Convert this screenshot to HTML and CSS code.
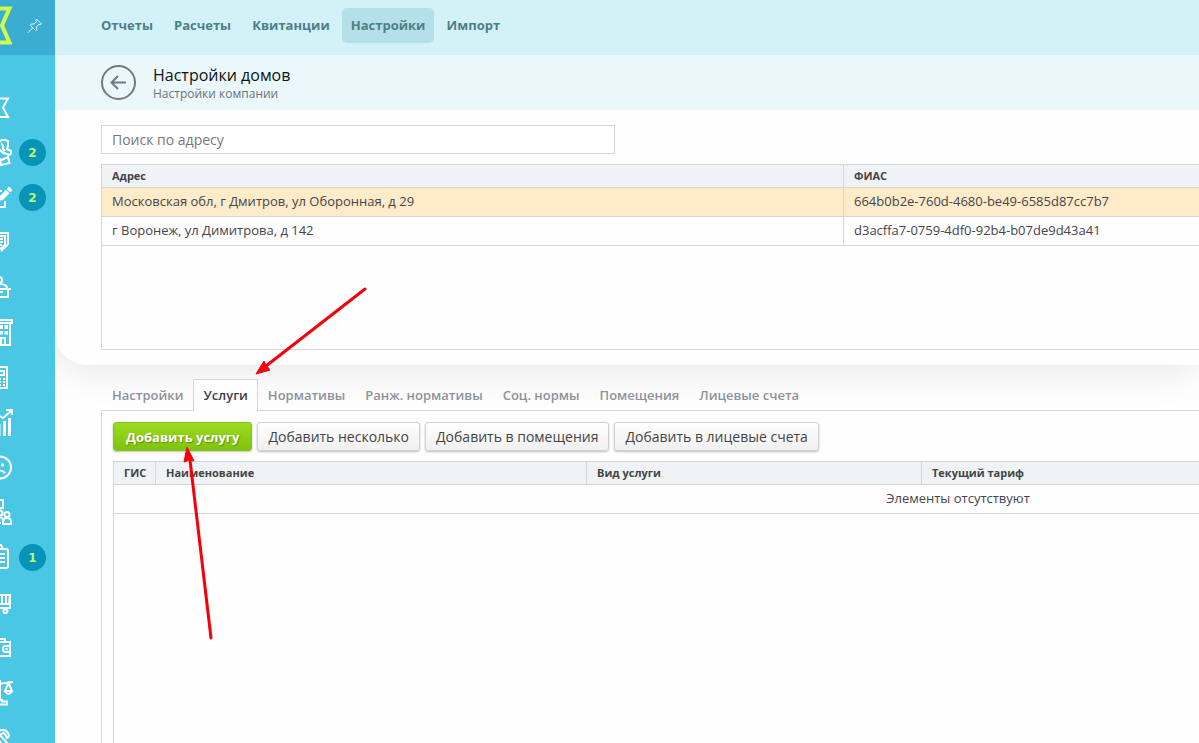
FILE: index.html
```html
<!DOCTYPE html>
<html lang="ru">
<head>
<meta charset="utf-8">
<title>Настройки домов</title>
<link rel="stylesheet" href="styles.css">
</head>
<body>
<div class="app">
  <aside class="sidebar">
    <div class="brand">
      <svg class="logo" width="14" height="55" viewBox="0 0 14 55" aria-hidden="true"><path d="M-3 8.500H9.500L2 25.500L9.500 42.500H-3"/></svg>
      <button class="pin" type="button" aria-label="Закрепить меню">
        <svg width="16" height="16" viewBox="0 0 16 16" aria-hidden="true"><path d="M9.500 1L14.500 6L13 6.600L11.800 6.300L9.600 8.800L9.800 11.800L8.600 12.600L3.400 7.300L4.300 6L7.300 6L9.500 3.800L8.800 2.200ZM5.700 9.700L1 14.800"/></svg>
      </button>
    </div>
    <nav class="side-nav" aria-label="Разделы">
      <a class="side-link" href="#" aria-label="Главная"><svg class="side-icon" viewBox="0 0 14 31"><path d="M-2 6.500H8L3 15.500L8 25H-2"/></svg></a>
      <a class="side-link" href="#" aria-label="Жители, 2"><svg class="side-icon" viewBox="0 0 14 31"><path d="M-1 6Q1 2 5 3L8 4L8 9L7 12L11 14V17L9 18L2 15M1 7Q4 8 3 12L5 14M-2 11L4 17M-2 21L2 23L8 20L9.500 26L1 28L0 23"/></svg><span class="badge">2</span></a>
      <a class="side-link" href="#" aria-label="Заявки, 2"><svg class="side-icon" viewBox="0 0 14 31"><path d="M-2 9H2M5 19V25H-2"/><path class="solid" d="M9 4.500L12.500 8L10.200 10.400L6.700 7ZM5.900 7.800L9.400 11.300L3.500 17.500L-1 19V15Z"/></svg><span class="badge">2</span></a>
      <a class="side-link" href="#" aria-label="Документы"><svg class="side-icon" viewBox="0 0 14 31"><path d="M-2 6H8V17L1 24M-2 9H5V18L0 22M-2 12H3M-2 15H3M-2 18H2"/></svg></a>
      <a class="side-link" href="#" aria-label="Приём"><svg class="side-icon" viewBox="0 0 14 31"><circle cx="-1" cy="8" r="3"/><path d="M-2 12Q7 12 7 16M-2 17H11M-2 20H3M8 17V25H-2"/></svg></a>
      <a class="side-link" href="#" aria-label="Дома"><svg class="side-icon" viewBox="0 0 14 31"><path d="M-2 3H12V6H-2M10 6V28H-2M1 22V28M5 22V28M-1 21H6"/><path class="solid" d="M0 8H3V12H0ZM4.500 8H8V12H4.500ZM0 14H3V17.500H0ZM4.500 14H8V17.500H4.500Z"/></svg></a>
      <a class="side-link" href="#" aria-label="Расчёты"><svg class="side-icon" viewBox="0 0 14 31"><path d="M-2 5H7V26H-2M-2 9H4V13H-2"/><path class="dots" d="M0 16V24M4 16V24"/></svg></a>
      <a class="side-link" href="#" aria-label="Статистика"><svg class="side-icon" viewBox="0 0 14 31"><path class="bold" d="M-1 17V29M4.500 14V29M9.500 11V29"/><path d="M-2 8L3 11L11 4M6 3H12V8"/></svg></a>
      <a class="side-link" href="#" aria-label="Жалобы"><svg class="side-icon" viewBox="0 0 14 31"><circle cx="0" cy="15.500" r="11"/><path d="M-5 21Q0 16 5 21"/><circle class="solid" cx="2.500" cy="13" r="1.700"/></svg></a>
      <a class="side-link" href="#" aria-label="Собрания"><svg class="side-icon" viewBox="0 0 14 31"><path d="M-2 3H3V11H-2"/><circle cx="0" cy="16" r="2.500"/><circle cx="7" cy="17.500" r="2.500"/><path d="M-2 20Q3 20 4 24M3 27V25Q3 21 7 21T11 25V27ZM-2 26H1"/></svg></a>
      <a class="side-link" href="#" aria-label="Задачи, 1"><svg class="side-icon" viewBox="0 0 14 31"><path d="M-2 7H6Q8 7 8 9V24Q8 26 6 26H-2M-2 3H1L3 7M0 12H5M0 16H5M0 20H5"/></svg><span class="badge">1</span></a>
      <a class="side-link" href="#" aria-label="Магазин"><svg class="side-icon" viewBox="0 0 14 31"><path d="M-2 8H10L9 17H-2M2 8V17M6 8V17M10 8V21H-2"/><circle cx="5.500" cy="24" r="2"/></svg></a>
      <a class="side-link" href="#" aria-label="Кошелёк"><svg class="side-icon" viewBox="0 0 14 31"><path d="M-2 10H10V24H-2M-2 7H5V10M10 14H5Q3 14 3 17T5 20H10"/><circle class="solid" cx="6.500" cy="17" r="1.300"/></svg></a>
      <a class="side-link" href="#" aria-label="Суд"><svg class="side-icon" viewBox="0 0 14 31"><path d="M-2 7L13 5M0 3V23M8.500 6L5 14H12ZM5 14Q8.500 20 12 14M-2 23H2V24.500H7V27.500H-2"/></svg></a>
      <a class="side-link" href="#" aria-label="Телефония"><svg class="side-icon" viewBox="0 0 14 31"><path d="M-2 9Q5 6 8 11Q10 15 7 16L5 12Q3 10 0 13L8 22V28M-2 17L4 25"/></svg></a>
    </nav>
  </aside>

  <main class="main">
    <nav class="top-nav" aria-label="Меню">
      <a href="#">Отчеты</a>
      <a href="#">Расчеты</a>
      <a href="#">Квитанции</a>
      <a class="current" href="#" aria-current="page">Настройки</a>
      <a href="#">Импорт</a>
    </nav>

    <header class="page-head">
      <button class="back" type="button" aria-label="Назад">
        <svg width="35" height="35" viewBox="0 0 35 35" aria-hidden="true"><circle cx="17.500" cy="17.500" r="16.500"/><path d="M25 17.500H10.500M17 11L10.500 17.500L17 24"/></svg>
      </button>
      <div class="titles">
        <h1>Настройки домов</h1>
        <p>Настройки компании</p>
      </div>
    </header>

    <section class="houses">
      <input class="search" type="text" placeholder="Поиск по адресу" aria-label="Поиск по адресу">
      <div class="houses-grid">
        <table class="grid">
          <colgroup><col class="col-address"><col></colgroup>
          <thead><tr><th>Адрес</th><th>ФИАС</th></tr></thead>
          <tbody>
            <tr class="selected"><td>Московская обл, г Дмитров, ул Оборонная, д 29</td><td>664b0b2e-760d-4680-be49-6585d87cc7b7</td></tr>
            <tr><td>г Воронеж, ул Димитрова, д 142</td><td>d3acffa7-0759-4df0-92b4-b07de9d43a41</td></tr>
          </tbody>
        </table>
      </div>
    </section>

    <section class="details">
      <div class="tabs" role="tablist">
        <button type="button" role="tab">Настройки</button>
        <button type="button" role="tab" class="active" aria-selected="true">Услуги</button>
        <button type="button" role="tab">Нормативы</button>
        <button type="button" role="tab">Ранж. нормативы</button>
        <button type="button" role="tab">Соц. нормы</button>
        <button type="button" role="tab">Помещения</button>
        <button type="button" role="tab">Лицевые счета</button>
      </div>
      <div class="tab-panel" role="tabpanel">
        <div class="toolbar">
          <button class="btn primary" type="button">Добавить услугу</button>
          <button class="btn" type="button">Добавить несколько</button>
          <button class="btn" type="button">Добавить в помещения</button>
          <button class="btn" type="button">Добавить в лицевые счета</button>
        </div>
        <div class="services-grid">
          <table class="grid services">
            <colgroup><col class="col-gis"><col class="col-name"><col class="col-kind"><col></colgroup>
            <thead><tr><th>ГИС</th><th>Наименование</th><th>Вид услуги</th><th>Текущий тариф</th></tr></thead>
            <tbody><tr><td class="empty" colspan="4">Элементы отсутствуют</td></tr></tbody>
          </table>
        </div>
      </div>
    </section>
  </main>

  <svg class="pointers" width="380" height="660" viewBox="0 0 380 660" aria-hidden="true">
    <path class="shaft" d="M365 289L266 366M211 638L190 460"/>
    <path class="head" d="M256 374L264 361L266 365L270 370ZM187 447L194 461L189.500 460L184 462Z"/>
  </svg>
</div>
</body>
</html>
```
FILE: styles.css
```css
* { box-sizing: border-box; }

body {
  margin: 0;
  font-family: "Open Sans", sans-serif;
  font-size: 13px;
  color: #45454f;
  background: #fefefe;
}

button, input { font: inherit; }

.app {
  position: relative;
  display: flex;
  height: 100vh;
  overflow: hidden;
}

/* Sidebar */
.sidebar {
  position: relative;
  z-index: 2;
  flex: none;
  width: 55px;
  overflow: hidden;
  background: #4ac7e5;
}

.brand {
  display: flex;
  align-items: center;
  gap: 13px;
  height: 55px;
  background: #3badd1;
}

.logo { flex: none; }
.logo path { fill: none; stroke: #ccff4d; stroke-width: 4; }

.pin {
  display: flex;
  padding: 0 0 3px;
  border: 0;
  background: none;
}

.pin path { fill: none; stroke: #d9f7ff; stroke-width: 1; }

.side-nav { padding-top: 30px; }

.side-link {
  display: flex;
  align-items: center;
  gap: 5px;
  height: 45px;
  text-decoration: none;
}

.side-icon { flex: none; width: 14px; height: 31px; }
.side-icon path, .side-icon circle { fill: none; stroke: #fff; stroke-width: 2; }
.side-icon .solid { fill: #fff; stroke: none; }
.side-icon .dots { stroke-dasharray: 2 1; }
.side-icon .bold { stroke-width: 3; }

.badge {
  width: 27px;
  height: 27px;
  border-radius: 50%;
  background: #0893b8;
  color: #b9fb72;
  font-family: "DejaVu Sans", sans-serif;
  font-size: 12px;
  font-weight: 700;
  line-height: 28px;
  text-align: center;
}

/* Top area */
.main {
  display: flex;
  flex: 1;
  flex-direction: column;
  min-width: 0;
}

.top-nav {
  display: flex;
  position: relative;
  z-index: 1;
  align-items: center;
  gap: 3px;
  flex: none;
  height: 55px;
  padding: 0 37px 4px;
  background: #d3f2f8;
}

.top-nav a {
  padding: 0 9px;
  border-radius: 5px;
  color: #4d7f88;
  font-size: 13px;
  font-weight: 700;
  line-height: 35px;
  text-decoration: none;
}

.top-nav .current { background: #b5dfe9; }

.page-head {
  display: flex;
  position: relative;
  z-index: 1;
  align-items: center;
  gap: 17px;
  flex: none;
  height: 55px;
  padding: 0 46px;
  background: #eaf8fc;
}

.back { display: flex; padding: 0; border: 0; background: none; }
.back circle, .back path { fill: none; stroke: #6f7b80; stroke-width: 2; }

.titles { padding-top: 2px; }

.page-head h1 {
  margin: 0;
  color: #111;
  font-size: 16px;
  font-weight: 400;
  line-height: 20px;
}

.page-head p {
  margin: 0;
  color: #6a7276;
  font-size: 12px;
  line-height: 17px;
}

/* Houses */
.houses {
  display: flex;
  flex: none;
  flex-direction: column;
  align-items: flex-start;
  gap: 10px;
  padding: 15px 0 15px 46px;
  border-radius: 0 0 0 32px;
  background: #fefefe;
  box-shadow: 0 0 45px rgba(0, 0, 0, 0.12);
}

.search {
  width: 514px;
  max-width: 100%;
  height: 29px;
  padding: 0 10px;
  border: 1px solid #d4d6d8;
  background: #fff;
  font-size: 14px;
}

.search::placeholder { color: #777; }

.houses-grid {
  align-self: stretch;
  height: 186px;
  border: 1px solid #d4d6d8;
  border-right: 0;
}

.grid {
  width: 100%;
  border-collapse: separate;
  border-spacing: 0;
  table-layout: fixed;
}

.grid th, .grid td {
  padding: 0 10px 2px;
  border-bottom: 1px solid #d4d6d8;
  text-align: left;
  white-space: nowrap;
}

.grid th + th, .grid td + td { border-left: 1px solid #d4d6d8; }

.grid th {
  height: 23px;
  background: #eff3f5;
  color: #444;
  font-size: 11px;
  font-weight: 700;
}

.grid td { height: 29px; }
.grid .selected { background: #feebc8; }
.col-address { width: 741px; }

/* Details */
.details {
  display: flex;
  flex: 1;
  flex-direction: column;
  min-height: 0;
  padding: 14px 0 0 46px;
}

.tabs {
  display: flex;
  position: relative;
  margin-bottom: -1px;
}

.tabs button {
  height: 32px;
  padding: 0 9px 2px;
  border: 1px solid transparent;
  border-bottom: 0;
  background: none;
  color: #8d929b;
  font-weight: 600;
}

.tabs button:first-child { padding-left: 10px; }

.tabs .active {
  border-color: #d4d6d8;
  background: #fefefe;
  color: #3e3e48;
}

.tab-panel {
  display: flex;
  flex: 1;
  flex-direction: column;
  gap: 10px;
  padding: 11px 0 0 11px;
  border: solid #d4d6d8;
  border-width: 1px 0 0 1px;
  overflow: hidden;
}

.toolbar { display: flex; gap: 5px; }

.btn {
  height: 29px;
  padding: 0 10px;
  border: 1px solid #d0d0d0;
  border-radius: 3px;
  background: linear-gradient(#fff, #f0f0f0);
  box-shadow: 0 1px 2px rgba(0, 0, 0, 0.25);
  color: #444;
  font-size: 14px;
}

.primary {
  padding: 0 12px;
  border-color: #84c21a;
  background: linear-gradient(#9bdc20, #80c30d);
  color: #fff;
  font-size: 13px;
  font-weight: 700;
  text-shadow: 1px 1px 1px rgba(60, 100, 0, 0.5);
}

.services-grid {
  flex: 1;
  border: solid #d4d6d8;
  border-width: 1px 0 0 1px;
}

.services { width: 1688px; }
.col-gis { width: 41px; }
.col-name { width: 431px; }
.col-kind { width: 335px; }
.grid .empty { text-align: center; }

/* Pointer arrows over the page */
.pointers {
  position: absolute;
  top: 0;
  left: 0;
  z-index: 3;
  pointer-events: none;
}

.shaft { fill: none; stroke: #f5000a; stroke-width: 3; stroke-linecap: round; }
.head { fill: #f5000a; stroke: #f5000a; }
```
